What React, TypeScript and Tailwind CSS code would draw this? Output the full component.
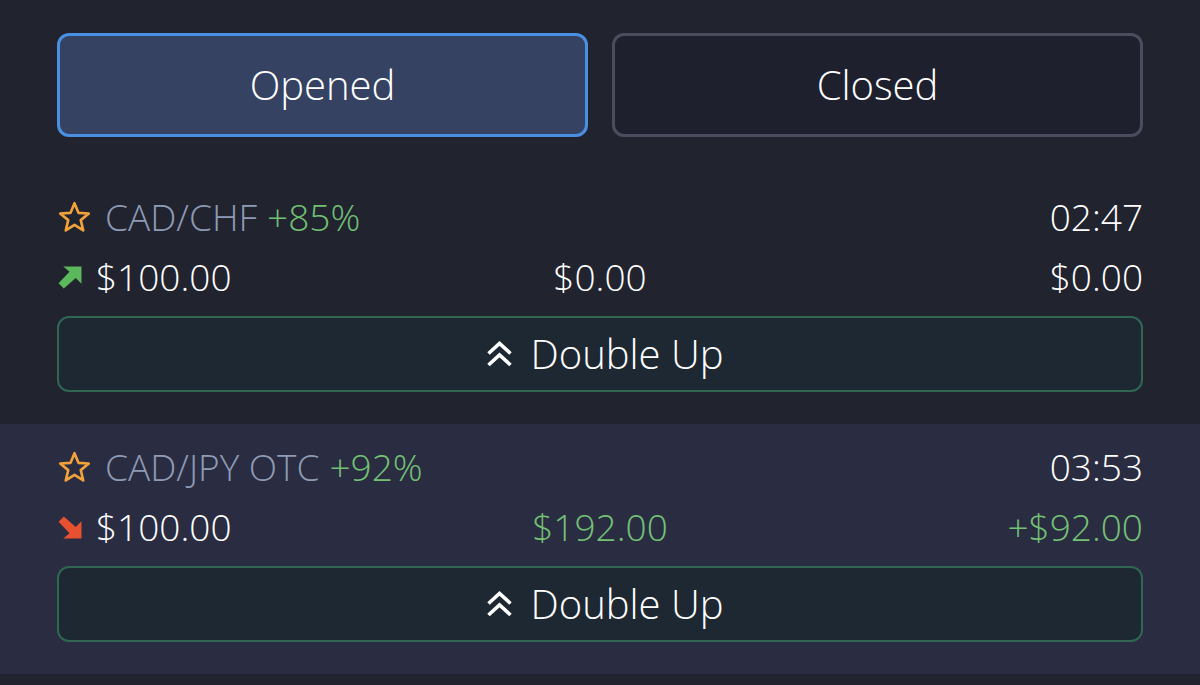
import React from "react";

type Trade = {
  pair: string;
  payout: string;
  time: string;
  dir: "up" | "down";
  amount: string;
  value: string;
  profit: string;
  win: boolean;
};

const trades: Trade[] = [
  { pair: "CAD/CHF", payout: "+85%", time: "02:47", dir: "up", amount: "$100.00", value: "$0.00", profit: "$0.00", win: false },
  { pair: "CAD/JPY OTC", payout: "+92%", time: "03:53", dir: "down", amount: "$100.00", value: "$192.00", profit: "+$92.00", win: true },
];

function StarIcon() {
  return (
    <svg width="35" height="35" viewBox="0 0 24 24" className="shrink-0">
      <polygon
        points="12,2.2 14.7,8.8 21.8,9.3 16.3,13.8 18,20.9 12,17.1 6,20.9 7.7,13.8 2.2,9.3 9.3,8.8"
        fill="none"
        stroke="#f2a23a"
        strokeWidth="1.8"
        strokeLinejoin="round"
      />
    </svg>
  );
}

function DirArrow({ dir }: { dir: "up" | "down" }) {
  const color = dir === "up" ? "#5cb85c" : "#e8512f";
  return (
    <svg width="25" height="23" viewBox="0 0 24 22" className={dir === "down" ? "shrink-0 scale-y-[-1]" : "shrink-0"}>
      <path d="M6 0.5 L23.5 0.5 L23.5 17 L18 11.5 L6.5 21.5 L1.5 16.5 L12 5.5 Z" fill={color} />
    </svg>
  );
}

function Chevrons() {
  return (
    <svg width="27" height="30" viewBox="0 0 27 30" className="shrink-0">
      <path d="M2.5 14.5 L13.5 4.5 L24.5 14.5 M2.5 26 L13.5 16 L24.5 26" fill="none" stroke="#ffffff" strokeWidth="3.6" />
    </svg>
  );
}

function TradeRow({ t, alt }: { t: Trade; alt: boolean }) {
  const green = "text-[#72c174]";
  return (
    <div className={`px-[57px] pt-[23px] pb-[32px] ${alt ? "bg-[#2a2c41]" : ""}`}>
      <div className="flex items-center h-[40px]">
        <StarIcon />
        <span className="ml-[13px] text-[#8d9bb5]">{t.pair}</span>
        <span className={`ml-[10px] ${green}`}>{t.payout}</span>
        <span className="ml-auto text-white">{t.time}</span>
      </div>
      <div className="grid grid-cols-3 items-center h-[40px] mt-[20px]">
        <div className="flex items-center gap-[14px] text-white">
          <DirArrow dir={t.dir} />
          <span>{t.amount}</span>
        </div>
        <div className={`text-center ${t.win ? green : "text-white"}`}>{t.value}</div>
        <div className={`text-right ${t.win ? green : "text-white"}`}>{t.profit}</div>
      </div>
      <button className="mt-[19px] w-full h-[76px] rounded-[12px] border-[2.5px] border-[#2f6751] bg-[#1d2832] flex items-center justify-center gap-[17px] pl-[10px] text-white text-[40px]">
        <Chevrons />
        <span>Double Up</span>
      </button>
    </div>
  );
}

export default function App() {
  return (
    <div
      className="w-[1200px] h-[685px] overflow-hidden bg-[#21232f] text-[37px] leading-[40px] font-light"
      style={{ fontFamily: '"Open Sans", "Noto Sans", sans-serif' }}
    >
      <div className="flex gap-[24px] px-[57px] pt-[33px]">
        <button className="flex-1 h-[104px] rounded-[12px] border-[3px] border-[#4a90e2] bg-[#354261] text-white text-[40px]">
          Opened
        </button>
        <button className="flex-1 h-[104px] rounded-[12px] border-[3px] border-[#4a4d5d] bg-[#1e202e] text-white text-[40px]">
          Closed
        </button>
      </div>
      <div className="mt-[37px]">
        {trades.map((t, i) => (
          <TradeRow key={t.pair} t={t} alt={i === 1} />
        ))}
      </div>
    </div>
  );
}
